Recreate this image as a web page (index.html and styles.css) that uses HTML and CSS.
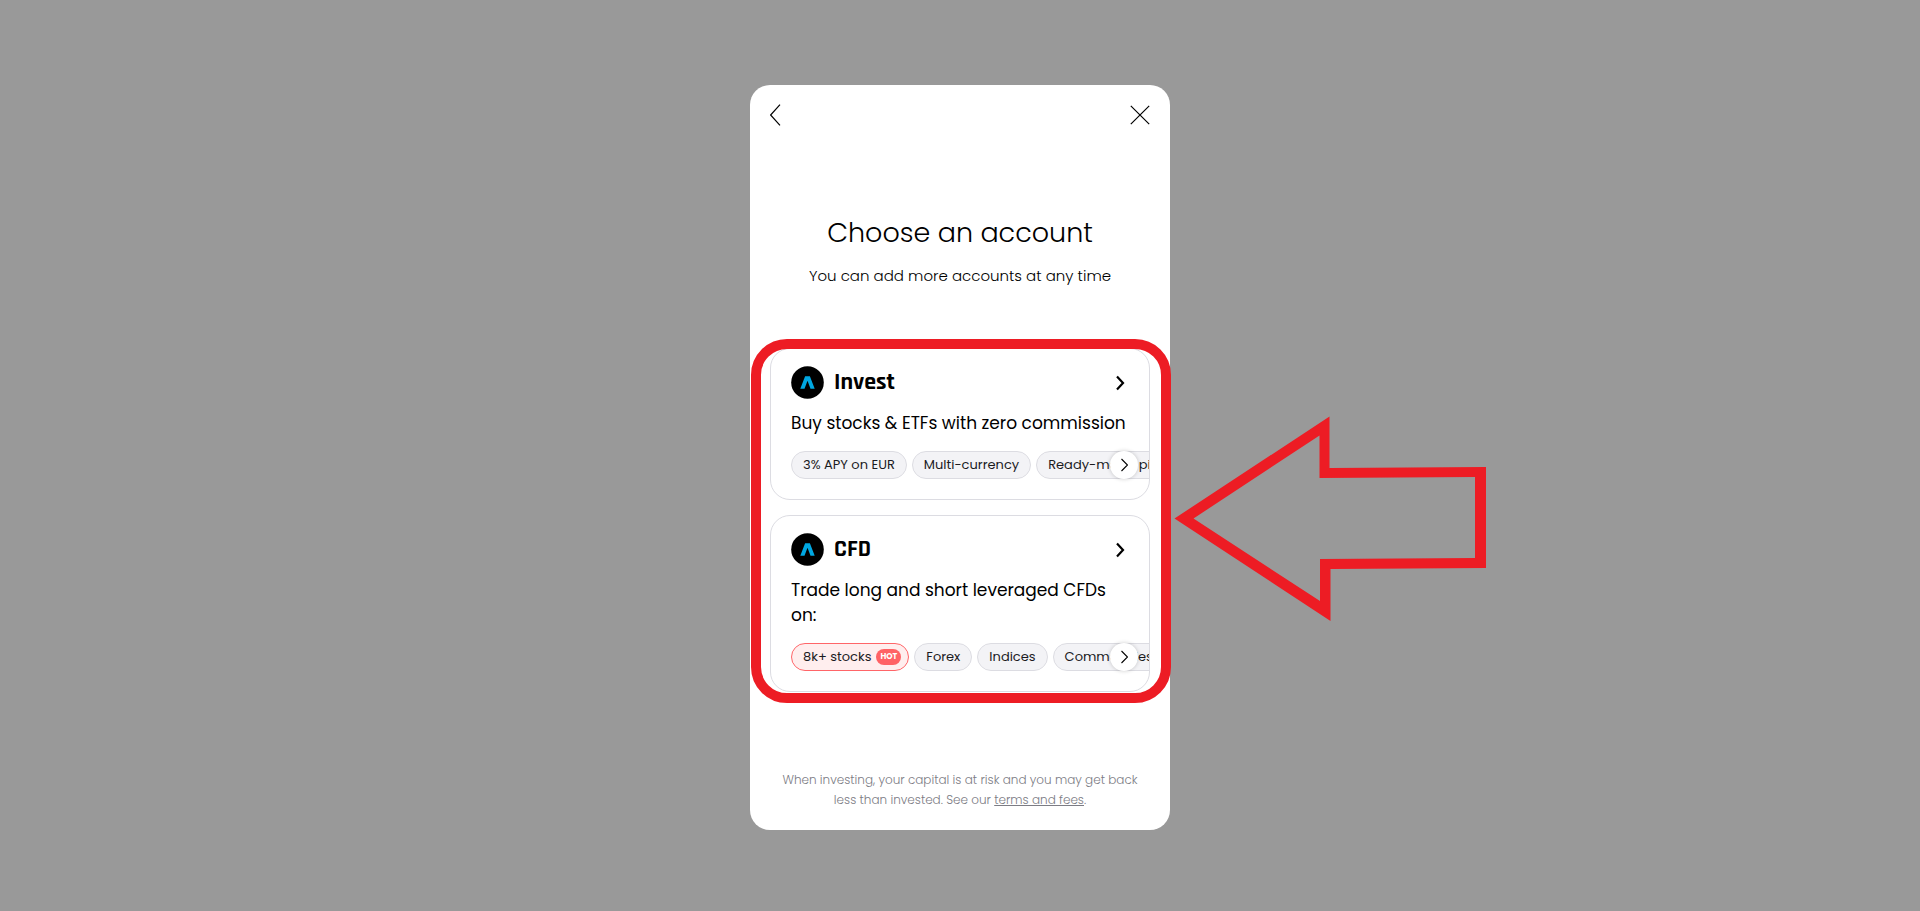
FILE: index.html
```html
<!DOCTYPE html>
<html lang="en">
<head>
  <meta charset="UTF-8">
  <meta name="viewport" content="width=device-width, initial-scale=1.0">
  <title>Choose an account</title>
  <link rel="stylesheet" href="styles.css">
</head>
<body>

<main class="modal">
  <!-- Back and close -->
  <div class="modal-header">
    <button type="button" class="icon-button" aria-label="Back">
      <svg width="12" height="22" viewBox="0 0 12 22"><path d="M10 .7L.6 11L10 21.3"/></svg>
    </button>
    <button type="button" class="icon-button" aria-label="Close">
      <svg width="20" height="22" viewBox="0 0 20 22"><path d="M.8 1.8L19.2 20.2M19.2 1.8L.8 20.2"/></svg>
    </button>
  </div>

  <h1>Choose an account</h1>
  <p class="subtitle">You can add more accounts at any time</p>

  <!-- Account cards -->
  <div class="accounts">
    <section class="card">
      <div class="card-header">
        <svg class="logo" viewBox="0 0 33 33"><circle cx="16.5" cy="16.5" r="16.3"/><path d="M9.3 22.7L14.1 10.2H18.9L23.7 22.7H19.5L16.5 14.7L13.5 22.7Z"/></svg>
        <h2>Invest</h2>
        <a href="#" class="card-link" aria-label="Open Invest account">
          <svg width="10" height="16" viewBox="0 0 10 16"><path d="M2 1.5L8 8L2 14.5"/></svg>
        </a>
      </div>
      <p class="card-text">Buy stocks &amp; ETFs with zero commission</p>
      <div class="chips">
        <span class="chip">3% APY on EUR</span>
        <span class="chip">Multi-currency</span>
        <span class="chip">Ready-made pies</span>
        <button type="button" class="next" aria-label="Show more">
          <svg width="8" height="14" viewBox="0 0 8 14"><path d="M1.5 1L7.5 7L1.5 13"/></svg>
        </button>
      </div>
    </section>

    <section class="card">
      <div class="card-header">
        <svg class="logo" viewBox="0 0 33 33"><circle cx="16.5" cy="16.5" r="16.3"/><path d="M9.3 22.7L14.1 10.2H18.9L23.7 22.7H19.5L16.5 14.7L13.5 22.7Z"/></svg>
        <h2>CFD</h2>
        <a href="#" class="card-link" aria-label="Open CFD account">
          <svg width="10" height="16" viewBox="0 0 10 16"><path d="M2 1.5L8 8L2 14.5"/></svg>
        </a>
      </div>
      <p class="card-text">Trade long and short leveraged CFDs on:</p>
      <div class="chips">
        <span class="chip chip-hot">8k+ stocks <span class="badge">HOT</span></span>
        <span class="chip">Forex</span>
        <span class="chip">Indices</span>
        <span class="chip">Commodities</span>
        <button type="button" class="next" aria-label="Show more">
          <svg width="8" height="14" viewBox="0 0 8 14"><path d="M1.5 1L7.5 7L1.5 13"/></svg>
        </button>
      </div>
    </section>

    <!-- Red frame and arrow over the cards -->
    <div class="highlight"></div>
    <svg class="arrow" width="314" height="206" viewBox="0 0 314 206">
      <path fill-rule="evenodd" d="M.5 102.5L155.5 .5V52L312 51V152L156.5 153V205ZM19.5 102.5L146 185V143L301 142V61L145.5 62V19.5Z"/>
    </svg>
  </div>

  <p class="disclaimer">When investing, your capital is at risk and you may get back less than invested. See our <a href="#">terms and fees</a>.</p>
</main>

</body>
</html>
```
FILE: styles.css
```css
* {
  box-sizing: border-box;
}

body {
  margin: 0;
  padding: 85px 20px 80px;
  background-color: #999;
  color: #000;
  font-family: Poppins, Inter, "Open Sans", sans-serif;
}

h1, h2, p {
  margin: 0;
}

button {
  padding: 0;
  border: 0;
  background: none;
  cursor: pointer;
}

svg {
  display: block;
}

/* Modal */
.modal {
  max-width: 420px;
  margin: 0 auto;
  padding: 19px 20px 20px;
  border-radius: 20px;
  background-color: #fff;
}

.modal-header {
  display: flex;
  justify-content: space-between;
}

.icon-button path {
  fill: none;
  stroke: #000;
  stroke-width: 1.2;
}

h1 {
  margin-top: 87px;
  font-size: 27px;
  font-weight: 300;
  line-height: 40px;
  text-align: center;
}

.subtitle {
  margin-top: 11px;
  font-size: 15px;
  font-weight: 300;
  line-height: 24px;
  text-align: center;
}

/* Cards */
.accounts {
  position: relative;
  display: flex;
  flex-direction: column;
  gap: 15px;
  margin-top: 60px;
}

.card {
  padding: 17px 20px 20px;
  overflow: hidden;
  border: 1px solid #dcdce2;
  border-radius: 20px;
}

.card-header {
  display: flex;
  align-items: center;
  gap: 10px;
}

.logo {
  width: 33px;
  height: 33px;
}

.logo path {
  fill: #00a7e1;
}

h2 {
  font-family: Rajdhani, Roboto, sans-serif;
  font-size: 24px;
  font-weight: 700;
  line-height: 33px;
}

.card-link {
  margin-left: auto;
  padding-right: 4px;
}

.card-link path {
  fill: none;
  stroke: #000;
  stroke-width: 2.2;
}

.card-text {
  margin-top: 12px;
  font-size: 17px;
  line-height: 25px;
}

/* Chips */
.chips {
  position: relative;
  display: flex;
  gap: 5px;
  margin-top: 15px;
  margin-right: -20px;
}

.chip {
  flex: none;
  padding: 0 11px;
  border: 1px solid #dcdce2;
  border-radius: 14px;
  background-color: #f3f3f6;
  color: #1b1b1f;
  font-size: 13px;
  line-height: 26px;
}

.chip-hot {
  display: flex;
  align-items: center;
  gap: 5px;
  padding-right: 7px;
  border-color: #ff6568;
  background-color: #ffeeee;
}

.badge {
  padding: 0 4px;
  border-radius: 8px;
  background-color: #ff6265;
  color: #fff;
  font-size: 8px;
  font-weight: 700;
  line-height: 16px;
}

.next {
  position: absolute;
  top: 0;
  right: 11px;
  display: flex;
  align-items: center;
  justify-content: center;
  width: 28px;
  height: 28px;
  border-radius: 50%;
  background-color: #fff;
  box-shadow: 0 0 4px rgba(0, 0, 0, 0.2);
}

.next path {
  fill: none;
  stroke: #000;
  stroke-width: 1.1;
}

/* Frame and arrow */
.highlight {
  position: absolute;
  inset: -9px -21px -11px -19px;
  border: 10px solid #ed1c24;
  border-radius: 36px;
  pointer-events: none;
}

.arrow {
  position: absolute;
  top: 68px;
  left: 404px;
  fill: #ed1c24;
  pointer-events: none;
}

.disclaimer {
  margin-top: 78px;
  color: #7c7c84;
  font-size: 12px;
  font-weight: 300;
  line-height: 20px;
  text-align: center;
}

.disclaimer a {
  color: inherit;
}
```
